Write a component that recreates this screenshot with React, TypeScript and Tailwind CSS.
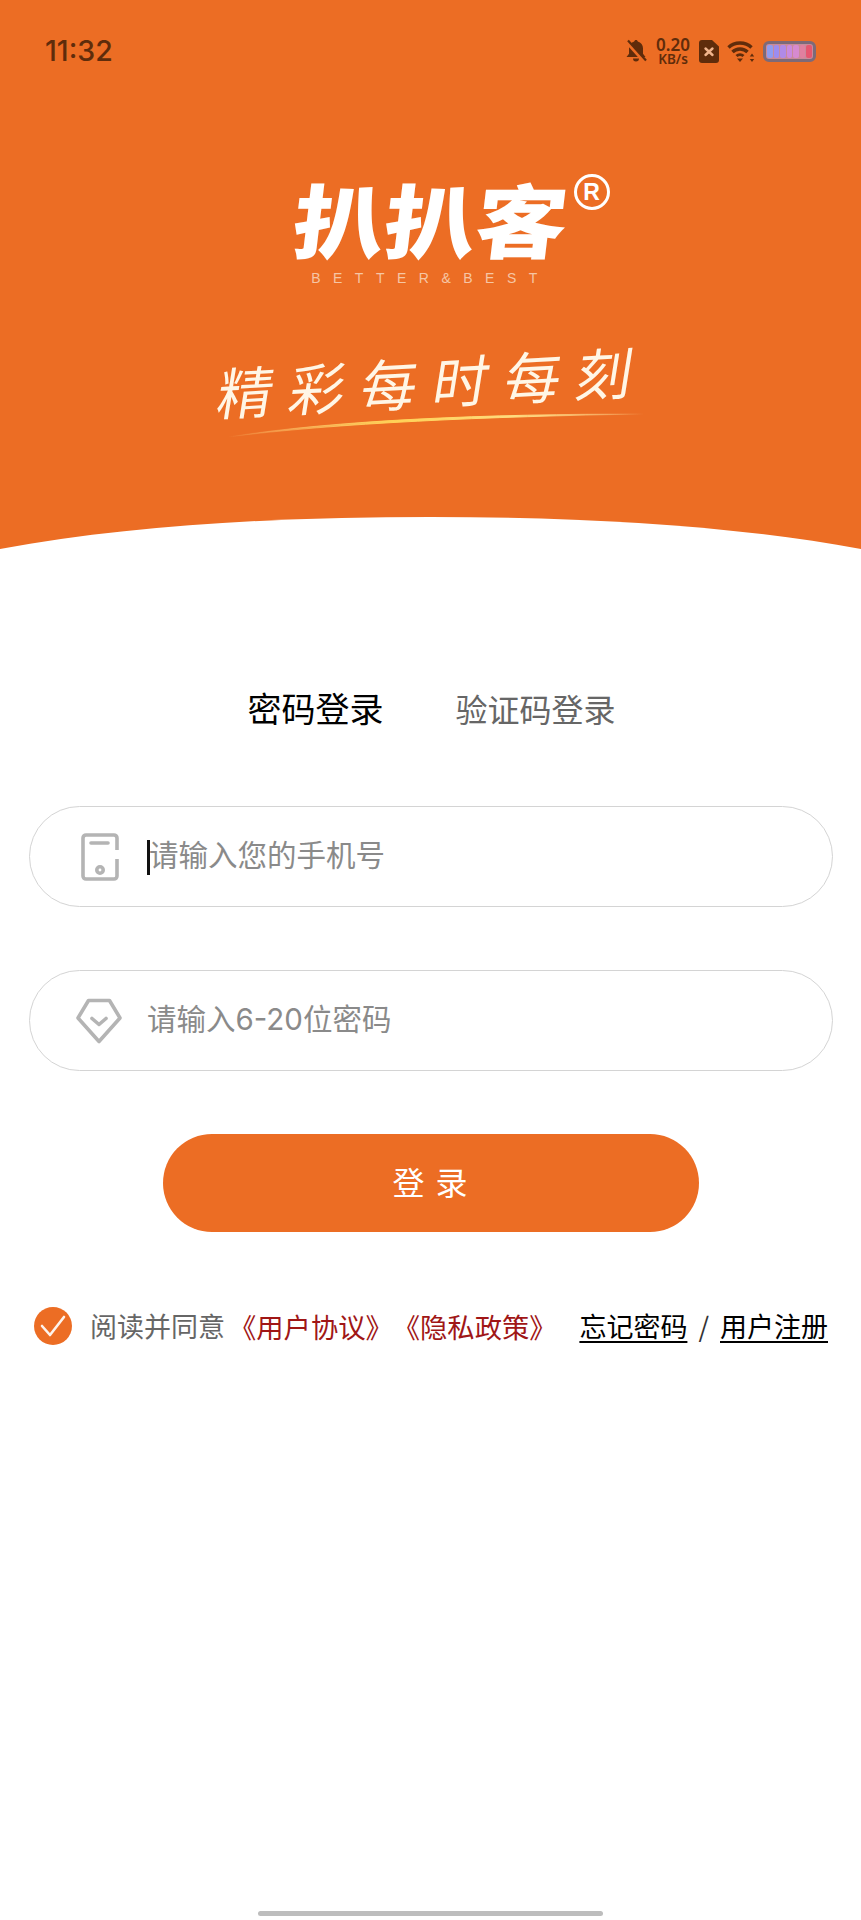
import React from "react";

const cjk = "font-['Noto_Sans_CJK_SC','Noto_Sans',sans-serif]";

function BellOff() {
  return (
    <svg width="22" height="24" viewBox="0 0 22 24" className="text-[#5f2c0b]">
      <path fill="currentColor" d="M11 1c.9 0 1.700.6 1.800 1.500 3.200.8 5.200 3.400 5.200 6.800v5.400l2.500 3.300H1.500L4 14.700V9.300c0-3.400 2-6 5.200-6.800C9.300 1.600 10.100 1 11 1zM8 19.500h6a3 3 0 0 1-6 0z" />
      <path d="M2 3l18 20" stroke="#ec6d24" strokeWidth="4" />
      <path d="M3 1.500l18 20" stroke="currentColor" strokeWidth="2.200" />
    </svg>
  );
}

function SimMissing() {
  return (
    <svg width="20" height="23" viewBox="0 0 20 23">
      <path fill="#5f2c0b" d="M3 0h10l7 6.500V20a3 3 0 0 1-3 3H3a3 3 0 0 1-3-3V3a3 3 0 0 1 3-3z" />
      <path d="M6.500 8.500l7 6.500M13.500 8.500l-7 6.500" stroke="#f0b48c" strokeWidth="2.400" strokeLinecap="round" />
    </svg>
  );
}

function Wifi() {
  return (
    <svg width="28" height="22" viewBox="0 0 28 22" fill="none" stroke="#5f2c0b">
      <path d="M1.500 7.500C7.500 1.500 18.500 1.500 24.500 7.500" strokeWidth="3.400" />
      <path d="M5.500 12C9.500 8 16.500 8 20.500 12" strokeWidth="3.400" />
      <path d="M9.500 16c2-1.800 5-1.800 7 0" strokeWidth="3" />
      <path d="M13 22l-3-3.500h6z" fill="#5f2c0b" stroke="none" />
      <path d="M25 13.500l-2.200 3h4.400zM25 22l-2.200-3h4.400z" fill="#5f2c0b" stroke="none" />
    </svg>
  );
}

function Battery() {
  const cells = ["#8f9cf0", "#9c8cf0", "#b08ae8", "#c98ae0", "#d68ad0", "#e0809f", "#e5566f"];
  return (
    <div className="flex h-[21px] w-[53px] gap-px rounded-[6px] border-[3px] border-[#7d6a78] bg-[#c98a9a] p-px">
      {cells.map((c, i) => (
        <span key={i} className="flex-1 rounded-[2px]" style={{ backgroundColor: c }} />
      ))}
    </div>
  );
}

function PhoneIcon() {
  return (
    <svg width="38" height="48" viewBox="0 0 38 48" fill="none" stroke="#b4b4b4" strokeWidth="3.600">
      <path d="M36 17V5a3 3 0 0 0-3-3H5a3 3 0 0 0-3 3v38a3 3 0 0 0 3 3h28a3 3 0 0 0 3-3V26" />
      <path d="M10 10h17" strokeLinecap="round" />
      <circle cx="19" cy="37" r="3.200" />
    </svg>
  );
}

function DiamondIcon() {
  return (
    <svg width="46" height="46" viewBox="0 0 46 46" fill="none" stroke="#b4b4b4" strokeWidth="3.600" strokeLinejoin="round">
      <path d="M12.500 2.500h21L44 20 23 43.500 2 20z" />
      <path d="M16 20.500l7 6 7-6" strokeLinecap="round" />
    </svg>
  );
}

function Field({ icon, placeholder, caret, inset }: { icon: React.ReactNode; placeholder: string; caret?: boolean; inset: string }) {
  return (
    <div className="relative ml-[29px] mr-[28px] flex h-[101px] items-center rounded-full border-[1.500px] border-[#d4d4d4]">
      <div className={`flex shrink-0 justify-center pl-[20px] ${inset}`}>{icon}</div>
      <input
        readOnly
        placeholder={placeholder}
        className="h-full min-w-0 flex-1 bg-transparent pb-[4px] font-['Inter','Noto_Sans_CJK_SC',sans-serif] text-[29.500px] outline-none placeholder:text-[#8a8a8a]"
      />
      {caret && <span className="absolute left-[117px] top-[33px] h-[35px] w-[3px] bg-[#111]" />}
    </div>
  );
}

export default function App() {
  return (
    <div className={`${cjk} flex h-[1920px] w-[861px] flex-col overflow-hidden bg-white [text-spacing-trim:space-all]`}>
      <header className="relative flex h-[549px] shrink-0 flex-col bg-[#ec6d24]">
        {/* status bar */}
        <div className="flex h-[100px] items-center pl-[45px] pr-[45px] pt-[2px] text-[#5f2c0b]">
          <span className="font-['Inter',sans-serif] text-[28.500px] font-medium">11:32</span>
          <div className="ml-auto flex items-center">
            <BellOff />
            <div className="ml-[8px] flex w-[36px] flex-col items-center font-['Noto_Sans',sans-serif] font-semibold">
              <span className="text-[17px] leading-[17px]">0.20</span>
              <span className="text-[13.500px] leading-[13px]">KB/s</span>
            </div>
            <div className="ml-[8px]"><SimMissing /></div>
            <div className="ml-[8px]"><Wifi /></div>
            <div className="ml-[8px]"><Battery /></div>
          </div>
        </div>

        {/* brand mark */}
        <div className="relative mt-[71px] flex flex-col items-center">
          <div className="relative">
            <span className="block origin-center -skew-x-6 scale-x-[1.14] text-[80px] font-black leading-[92px] text-white">扒扒客</span>
            <span className="absolute right-[-59px] top-[3px] flex h-[36px] w-[36px] items-center justify-center rounded-full border-[3px] border-white font-['Liberation_Sans',sans-serif] text-[23px] font-bold leading-none text-white">R</span>
          </div>
          <span className="mt-[6px] font-['Liberation_Sans',sans-serif] text-[14px] leading-[18px] tracking-[12.500px] text-[#f6c6a4]">BETTER&amp;BEST</span>
        </div>

        {/* slogan with brush stroke */}
        <div className="relative mt-[58px] flex justify-center pl-[6px]">
          <span className="font-['Noto_Sans_CJK_JP','Noto_Sans_CJK_SC',sans-serif] -skew-x-12 -rotate-3 text-[56px] font-normal leading-[70px] tracking-[16px] text-[#fff6e6]">精彩每时每刻</span>
          <svg className="absolute left-[226px] top-[63px]" width="420" height="32" viewBox="0 0 420 32" fill="none">
            <defs>
              <linearGradient id="stroke" x1="0" x2="1" y1="0" y2="0">
                <stop offset="0" stopColor="#ffd98a" stopOpacity="0" />
                <stop offset="0.4" stopColor="#ffd257" />
                <stop offset="0.7" stopColor="#ffdc80" />
                <stop offset="1" stopColor="#ffe0a0" stopOpacity="0" />
              </linearGradient>
            </defs>
            <path d="M2 29C110 12 260 6 418 6C260 8.500 110 15 2 29z" fill="url(#stroke)" stroke="url(#stroke)" strokeWidth="1" />
          </svg>
        </div>

        {/* curved lower edge */}
        <svg className="absolute bottom-0 left-0" width="861" height="33" viewBox="0 0 861 33">
          <path d="M0 33C130 9 280 1 430.500 1S731 9 861 33z" fill="#fff" />
        </svg>
      </header>

      {/* login mode tabs */}
      <div className="mt-[137px] flex h-[44px] items-center justify-center gap-[72px] pl-[2px]">
        <span className="text-[34px] leading-[44px] text-black">密码登录</span>
        <span className="text-[32px] leading-[44px] text-[#666]">验证码登录</span>
      </div>

      <div className="mt-[76px] flex flex-col gap-[63px]">
        <Field icon={<PhoneIcon />} placeholder="请输入您的手机号" caret inset="w-[119px]" />
        <Field icon={<DiamondIcon />} placeholder="请输入6-20位密码" inset="w-[117px]" />
      </div>

      <button className="ml-[163px] mt-[63px] h-[98px] w-[536px] rounded-full bg-[#ec6d24] pb-[5px] text-[32px] tracking-[2px] text-white">
        登 录
      </button>

      {/* agreement and account links */}
      <div className="mt-[74px] flex h-[40px] items-center pl-[34px] pr-[33px] text-[27px]">
        <span className="flex h-[38px] w-[38px] shrink-0 items-center justify-center rounded-full bg-[#ec6d24]">
          <svg width="26" height="22" viewBox="0 0 26 22" fill="none" stroke="#fdf3ec" strokeWidth="2.600" strokeLinecap="round" strokeLinejoin="round">
            <path d="M2 11l8 9L24 2" />
          </svg>
        </span>
        <span className="ml-[18px] text-[#666]">阅读并同意</span>
        <span className="ml-[4px] text-[27.300px] text-[#a01616]">《用户协议》《隐私政策》</span>
        <span className="ml-auto text-black underline underline-offset-4">忘记密码</span>
        <span className="mx-[11px] text-[#333]">/</span>
        <span className="text-black underline underline-offset-4">用户注册</span>
      </div>

      {/* gesture bar */}
      <div className="mx-auto mb-[4px] mt-auto h-[5px] w-[345px] rounded-full bg-[#bdbdbd]" />
    </div>
  );
}
